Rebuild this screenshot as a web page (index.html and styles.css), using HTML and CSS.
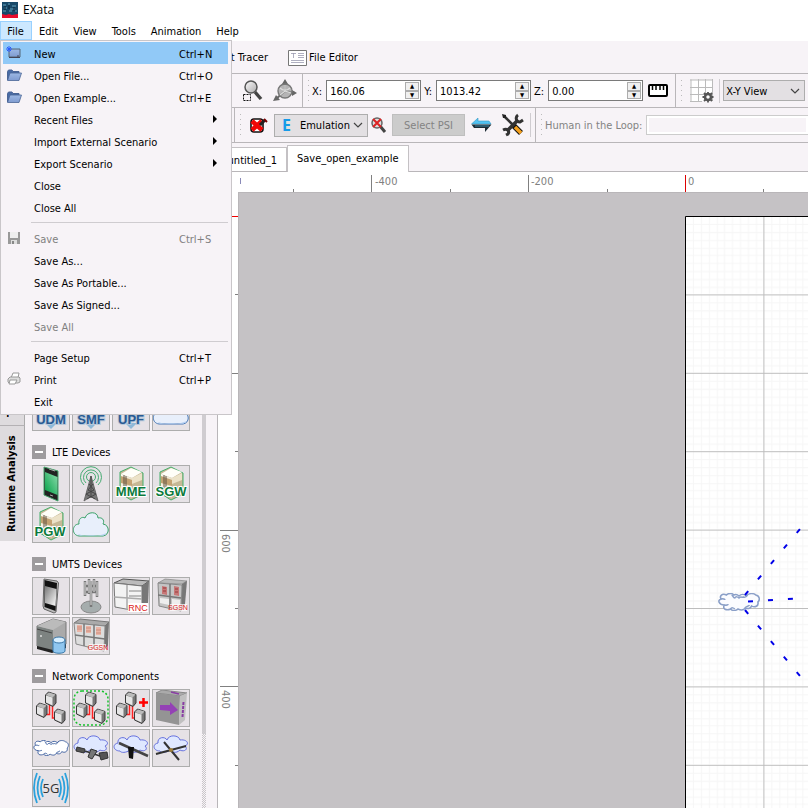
FILE: index.html
```html
<!DOCTYPE html>
<html lang="en">
<head>
<meta charset="utf-8">
<title>EXata</title>
<link rel="stylesheet" href="styles.css">
</head>
<body>
<svg class="defs" aria-hidden="true">
  <defs>
    <linearGradient id="steel" x1="0" y1="0" x2="1" y2="1"><stop offset="0" stop-color="#fff"/><stop offset="1" stop-color="#8c8c8c"/></linearGradient>
    <linearGradient id="green" x1="1" y1="0" x2="0" y2="1"><stop offset="0" stop-color="#8fdcae"/><stop offset="1" stop-color="#00a045"/></linearGradient>
    <linearGradient id="grey" x1="0" y1="0" x2="1" y2="1"><stop offset="0" stop-color="#777"/><stop offset="1" stop-color="#fff"/></linearGradient>
    <linearGradient id="blue" x1="0" y1="0" x2="0" y2="1"><stop offset="0" stop-color="#9cb8e4"/><stop offset="1" stop-color="#7f9bd0"/></linearGradient>
    <linearGradient id="cloth" x1="0" y1="0" x2="1" y2="1"><stop offset="0" stop-color="#fffdf5"/><stop offset="1" stop-color="#d6c9a8"/></linearGradient>
    <symbol id="folder" viewBox="0 0 16 12"><path d="M1.500 11V2.500L2.500 1H6L7 2.500H13V4" fill="#486ba5" stroke="#4a6596"/><path d="M1.500 11.500L4 4H15.500L13 11.500Z" fill="url(#blue)" stroke="#4a6596" stroke-width=".8"/></symbol>
    <symbol id="chevron" viewBox="0 0 10 6"><path d="M1 1L5 5L9 1" fill="none" stroke="#444" stroke-width="1.200"/></symbol>
    <symbol id="tower-box" viewBox="0 0 36 36"><path d="M7 6L18 1L30 7V28L18 34L7 27Z" fill="#c6b896" stroke="#45b06d"/><path d="M8 8L18 2L29 6L19 12Z" fill="#fffef8"/><path d="M8 8L19 12V32L8 26Z" fill="url(#cloth)"/><path d="M8 10L19 14V20L8 17Z" fill="#c4a273"/><path d="M19 12L29 7V14L19 18Z" fill="#ece2c8"/><path d="M11 9V25M13 10V25" stroke="#5f5344"/></symbol>
    <symbol id="nodes" viewBox="0 0 36 36"><path d="M16.500 15V24.500H13M19.500 15V28H22" fill="none" stroke="#f22" stroke-width="1.500"/><g id="cube"><path d="M12.500 5L15.500 2L23 4.500V13L20 16.500L12.500 13Z" fill="#777" stroke="#3a3a3a"/><path d="M13 5.500L19.500 7.500V15.500L13 12.500Z" fill="#e6e6e6"/><path d="M13 5L16 2.500L22.500 4.500L19.500 7.500Z" fill="#bbb"/></g><use href="#cube" x="-9" y="11"/><use href="#cube" x="9" y="17"/></symbol>
    <symbol id="cloud" viewBox="0 0 36 30"><path d="M6 26C-2 25-1 14 6 14C5 9 9 6 12 8C14 1 25 1 25 8C29 7 32 10 30 14C37 15 37 25 30 26Z" fill="#e8effb"/><path d="M3 23C9 27 27 27 33 23C32 26 30 25.500 29 25.500H7Z" fill="#b4cff2" stroke="none"/></symbol>
    <symbol id="fluffy" viewBox="0 0 40 18" preserveAspectRatio="none"><path d="M6 12C1 12-1 7 3 6C1 3 4 0 8 2C10 0 14 0 15 2C17 1 19 2 20 3C22 1 25 1 27 3C29 0 34 0 36 2C40 3 40 7 38 9C39 13 35 15 32 13C31 16 28 16 26 15C24 18 21 17 19 16C17 18 13 18 12 16C8 18 4 16 6 12Z"/><path d="M13 2C15 3 14 5 16 5C17 3 19 4 20 5C22 3 23 5 24 4C26 5 27 4 28 2M6 12C8 13 9 11 10 12M12 16C13 14 15 15 16 16M26 15C26 13 29 14 30 12M3 6C5 5 6 7 7 6" fill="none"/></symbol>
    <symbol id="sky" viewBox="0 0 36 20"><path d="M7 16C0 16-1 9 5 8C4 2 12 1 14 5C16-1 26 0 27 5C34 4 37 9 32 11C36 15 30 17 27 15C23 19 18 17 17 15C13 18 8 18 7 16Z" fill="#dfe8ff" stroke="#6670dd"/></symbol>
    <symbol id="cabinet" viewBox="0 0 36 36"><path d="M5 5L12 1L34 3L29 6Z" fill="#b9b9b9" stroke="#777" stroke-width=".6"/><path d="M29 6L34 3L32 26L28 32Z" fill="#777"/><path d="M5 5L29 7L28 33L6 28Z" fill="#c4c4c4" stroke="#888"/><path d="M7 20L16 21V27L7 25ZM19 21L27 22V29L19 28Z" fill="#eee"/><path d="M5 17L28 20M17 6V31" stroke="#777" stroke-width="1.500"/></symbol>
  </defs>
</svg>

<div class="app">
  <header class="titlebar">
    <svg class="logo" viewBox="0 0 16 16" aria-hidden="true"><path fill="#184969" d="M0 0H16V16H0Z"/><path fill="#e80c2d" d="M0 12L4 13L7 12L10 13L16 12V16H0Z"/><path d="M1 3H4M6 2H8M10 4H14M2 6H5M8 7H13M1 9H4M7 9H10M13 9H15" stroke="#65a3bd"/><path d="M3 4V8M7 3V7M12 5V9" stroke="#0a2438"/></svg>
    <span>EXata</span>
  </header>
  <nav class="menubar">
    <button class="open">File</button><button>Edit</button><button>View</button><button>Tools</button><button>Animation</button><button>Help</button>
  </nav>

  <div class="toolbar modes">
    <button class="mode tracer">t Tracer</button>
    <button class="mode"><svg width="19" height="17" viewBox="0 0 19 17" aria-hidden="true"><path d="M.5.500H18.500V15.500H.5Z" fill="#fff" stroke="#777"/><path d="M3 3.500H8M5.500 3V8M10 3.500H16M10 5.500H16M10 7.500H16M3 10.500H16M3 12.500H16" stroke="#9b9bb0" stroke-width=".8"/></svg>File Editor</button>
  </div>

  <div class="toolbar coords">
    <div class="group tools-left">
      <button class="icon" aria-label="Zoom region"><svg width="22" height="22" viewBox="0 0 22 22"><path d="M13 12L19 19" stroke="#444" stroke-width="3.400"/><circle cx="9" cy="7" r="6" fill="url(#steel)" fill-opacity=".7" stroke="#555" stroke-width="1.500"/><path d="M1.500 14.500H8.500V20.500H1.500Z" fill="none" stroke="#111" stroke-dasharray="2 1"/></svg></button>
      <button class="icon" aria-label="Axes"><svg width="24" height="24" viewBox="0 0 24 24"><path d="M12 2V12L22 14M12 12L3 20" fill="none" stroke="#666" stroke-width="2"/><path d="M12 0L15 5H9ZM24 14L19 17V11ZM0 22L3 16L7 21Z" fill="#666"/><circle cx="12" cy="12" r="7" fill="#999" fill-opacity=".7" stroke="#777" stroke-width="1.400"/><path d="M12 6V12L18 14M12 12L7 16M7 9C10 12 14 12 17 9" fill="none" stroke="#ddd" stroke-width="1.200"/></svg></button>
    </div>
    <div class="group">
      <span class="grip"></span>
      <label for="cx">X:</label><span class="spin"><input id="cx" type="text" value="160.06"><span class="steps"><button aria-label="X up">▲</button><button aria-label="X down">▼</button></span></span>
      <label for="cy">Y:</label><span class="spin"><input id="cy" type="text" value="1013.42"><span class="steps"><button aria-label="Y up">▲</button><button aria-label="Y down">▼</button></span></span>
      <label for="cz">Z:</label><span class="spin"><input id="cz" type="text" value="0.00"><span class="steps"><button aria-label="Z up">▲</button><button aria-label="Z down">▼</button></span></span>
      <button class="icon measure" aria-label="Measure"><svg width="20" height="13" viewBox="0 0 20 13"><rect x="1" y="1" width="18" height="11" rx="1" fill="#fff" stroke="#000" stroke-width="2"/><path d="M4.500 1V6M8 1V6M12 1V6M15.500 1V6" stroke="#000" stroke-width="1.500"/></svg></button>
    </div>
    <div class="group">
      <span class="grip"></span>
      <button class="icon grid-btn" aria-label="Grid settings"><svg width="24" height="24" viewBox="0 0 24 24"><path d="M.5 1H22V22H.5Z" fill="#fff"/><path d="M1 .5V22M8.500 0V22M15.500 0V22M22.500 0V22M0 1H23M0 8.500H23M0 15.500H23M0 22.500H12" stroke="#bbb"/><circle cx="18" cy="18" r="3" fill="none" stroke="#555" stroke-width="2.500"/><path d="M18 13V15M18 21V23.500M12.500 18H15M21 18H23.500M14 14L16 16M20 20L22 22M22 14L20 16M16 20L14 22" stroke="#555" stroke-width="1.800"/></svg></button>
      <span class="sep"></span>
      <span class="combo view"><select aria-label="View plane"><option>X-Y View</option></select><svg class="chev" aria-hidden="true"><use href="#chevron"/></svg></span>
    </div>
  </div>

  <div class="toolbar emulation">
    <div class="group lead"></div>
    <div class="group">
      <span class="grip"></span>
      <button class="icon stop" aria-label="Disable editing"><svg width="18" height="17" viewBox="0 0 18 17"><rect x="1" y="2" width="12" height="13" rx="3" fill="#fff" stroke="#111" stroke-width="1.600"/><path d="M2 4L12 13M12 4L2 13" stroke="#f00707" stroke-width="4.500"/><path d="M10 8L15 3" stroke="#222" stroke-width="3"/><path d="M14 2L17 5" stroke="#700" stroke-width="2"/></svg></button>
      <span class="combo mode-select"><b aria-hidden="true">E</b><select aria-label="Run mode"><option>Emulation</option></select><svg class="chev" aria-hidden="true"><use href="#chevron"/></svg></span>
      <button class="icon inspect" aria-label="Clear inspection"><svg width="16" height="17" viewBox="0 0 16 17"><path d="M9 9L14 15" stroke="#444" stroke-width="3"/><circle cx="6" cy="6" r="5" fill="#ddd" stroke="#666" stroke-width="1.500"/><path d="M2 2L10 10M10 2L2 10" stroke="#d22" stroke-width="2"/></svg></button>
      <button class="psi" disabled>Select PSI</button>
      <button class="icon swap" aria-label="Swap"><svg width="21" height="16" viewBox="0 0 21 16"><path d="M.5 7L7 1V4H18L20 7Z" fill="#53c3f3" stroke="#3899c4" stroke-width=".6"/><path d="M.5 7.500H20.500L14 15V11H3Z" fill="#1d2c35"/><path d="M4 9H18" stroke="#3d84a4"/></svg></button>
      <button class="icon wrench" aria-label="Tools"><svg width="24" height="24" viewBox="0 0 24 24"><path d="M12 12L20 20" stroke="#111" stroke-width="5.500"/><path d="M14 14L20 20" stroke="#f5a01d" stroke-width="3.500"/><path d="M3 3L12 12" stroke="#333" stroke-width="2.500"/><path d="M1 1L5 2V5L2 5Z" fill="#222"/><path d="M6 18L17 7" stroke="#333" stroke-width="3.500"/><path d="M17 2C14 4 15 9 19 9L22 7M2 17C6 15 9 18 7 21L5 22" fill="none" stroke="#333" stroke-width="3"/></svg></button>
      <span class="sep"></span>
    </div>
    <div class="group human">
      <span class="grip"></span>
      <label for="hitl">Human in the Loop:</label><input id="hitl" type="text" disabled>
    </div>
  </div>

  <div class="tabs">
    <button class="tab first">untitled_1</button><button class="tab active">Save_open_example</button>
  </div>

  <main class="work">
    <aside class="side">
      <div class="side-tabs"><button class="upper">T</button><button>Runtime Analysis</button></div>
      <div class="palette">
        <section>
          <div class="tiles">
            <button aria-label="UDM"><svg viewBox="0 0 36 36"><path d="M18 35L12 29H24Z" fill="#8fb9d8"/><text class="tag blue" x="18" y="30">UDM</text></svg></button>
            <button aria-label="SMF"><svg viewBox="0 0 36 36"><path d="M18 35L12 29H24Z" fill="#8fb9d8"/><text class="tag blue" x="18" y="30">SMF</text></svg></button>
            <button aria-label="UPF"><svg viewBox="0 0 36 36"><path d="M18 35L12 29H24Z" fill="#8fb9d8"/><text class="tag blue" x="18" y="30">UPF</text></svg></button>
            <button aria-label="5G cloud"><svg viewBox="0 0 36 36"><use href="#cloud" y="4" width="36" height="30" stroke="#4677b5"/></svg></button>
          </div>
        </section>
        <section>
          <h2><button class="fold" aria-label="Collapse LTE Devices"></button><span>LTE Devices</span></h2>
          <div class="tiles">
            <button aria-label="LTE phone"><svg viewBox="0 0 36 36"><path d="M11 1L25 5V35L11 29Z" fill="#222" stroke="#44a36a"/><path d="M12 6L24.500 11V29L12 24Z" fill="url(#green)"/><path d="M16 3L22 5M17 29L20 30" stroke="#aaa"/></svg></button>
            <button aria-label="eNodeB"><svg viewBox="0 0 36 36"><g fill="none" stroke="#45aa71"><path d="M11 19A10.500 10.500 0 1 1 25 19"/><path d="M13 17A7.500 7.500 0 1 1 23 17"/><circle cx="18" cy="11" r="4.500"/></g><path d="M18 10L11 35L18 30L25 35Z" fill="#777" stroke="#666"/><path d="M16 18L21 24L13 28L22 33M20 18L15 24L23 28L14 33M18 10V32" fill="none" stroke="#444"/></svg></button>
            <button aria-label="MME"><svg viewBox="0 0 36 36"><use href="#tower-box"/><text class="tag" x="18" y="30">MME</text></svg></button>
            <button aria-label="SGW"><svg viewBox="0 0 36 36"><use href="#tower-box"/><text class="tag" x="18" y="30">SGW</text></svg></button>
            <button aria-label="PGW"><svg viewBox="0 0 36 36"><use href="#tower-box"/><text class="tag" x="17" y="30">PGW</text></svg></button>
            <button aria-label="LTE cloud"><svg viewBox="0 0 36 36"><use href="#cloud" y="4" width="36" height="30" stroke="#39a168"/></svg></button>
          </div>
        </section>
        <section>
          <h2><button class="fold" aria-label="Collapse UMTS Devices"></button><span>UMTS Devices</span></h2>
          <div class="tiles">
            <button aria-label="UMTS phone"><svg viewBox="0 0 36 36"><path d="M11 1L24 3L25.500 5L23 34L21 35L11 31L10 28Z" fill="#bbb" stroke="#666"/><path d="M11.500 2L24 5L22.500 33L11.500 29Z" fill="#111"/><path d="M12 8L23.500 11L22.500 28L12 25Z" fill="url(#grey)"/></svg></button>
            <button aria-label="NodeB"><svg viewBox="0 0 36 36"><ellipse cx="18" cy="29" rx="10" ry="6" fill="#a5adad" stroke="#888"/><path d="M18 3V29M12 8H23M12 14H24" stroke="#777" stroke-width="2.500"/><path d="M12 3V18M16 1V16M21 1V15M24 3V19" stroke="#777" stroke-width="2.500"/><path d="M12 4V17M16 2V15M21 2V14M24 4V18M18 3V27" stroke="#ddd"/></svg></button>
            <button aria-label="RNC"><svg viewBox="0 0 36 36"><path d="M1 5L10 1L36 3L29 8Z" fill="#bbb" stroke="#555"/><path d="M29 8L36 3L35 27L29 34Z" fill="#777"/><path d="M1 5L29 8V34L2 29Z" fill="#f3f3f3" stroke="#777"/><path d="M1 19L29 21M14 7V32M16 13H29M16 18H29" stroke="#aaa" stroke-width="1.500"/><path d="M15 25H35V34H15Z" fill="#fff"/><text class="model large" x="25" y="33">RNC</text></svg></button>
            <button aria-label="SGSN"><svg viewBox="0 0 36 36"><use href="#cabinet"/><path d="M9 8L14 9V17L9 16ZM21 8L26 9V18L21 17Z" fill="#c77777"/><path d="M10 10H13M22 11H25M10 13H13M22 14H25" stroke="#963c3c"/><path d="M17 26H34V33H17Z" fill="#fff" fill-opacity=".7"/><text class="model" x="25" y="32">SGSN</text></svg></button>
            <button aria-label="HLR"><svg viewBox="0 0 36 36"><path d="M4 8L20 1L33 4V26L19 33L4 28Z" fill="#aaa" stroke="#777"/><path d="M4 8L20 12V33L4 28Z" fill="#7d8381"/><path d="M4 8L20 1L33 4L20 12Z" fill="#bbb"/><path d="M4 28L20 32L33 26V30L19 35L4 31Z" fill="#222"/><path d="M4 11L19 15" stroke="#444"/><circle cx="8" cy="18" r="1" fill="#ddd"/><path d="M20 22V33C20 36 32 36 32 33V22" fill="#8fc6ef" stroke="#3977a8"/><ellipse cx="26" cy="22" rx="6" ry="3" fill="#d8efff" stroke="#3977a8"/></svg></button>
            <button aria-label="GGSN"><svg viewBox="0 0 36 36"><path d="M1 5L7 1L36 4L32 8Z" fill="#aaa" stroke="#777"/><path d="M32 8L36 4L35 27L31 33Z" fill="#777"/><path d="M1 5L32 8L31 33L3 26Z" fill="#ddd" stroke="#888"/><path d="M11 6V28M21 7V30M2 17L32 21" stroke="#777" stroke-width="1.500"/><path d="M4 7H9V14H4ZM13 8H18V15H13ZM23 9H28V17H23Z" fill="#e9b5a7"/><path d="M4 9H9M4 11H9M13 10H18M13 13H18M23 12H28M23 15H28" stroke="#cc8d7c"/><path d="M16 26H33V33H16Z" fill="#fff" fill-opacity=".7"/><text class="model" x="25" y="32">GGSN</text></svg></button>
          </div>
        </section>
        <section>
          <h2><button class="fold" aria-label="Collapse Network Components"></button><span>Network Components</span></h2>
          <div class="tiles">
            <button aria-label="Hierarchy"><svg viewBox="0 0 36 36"><use href="#nodes"/></svg></button>
            <button aria-label="Subnet"><svg viewBox="0 0 36 36"><rect x="1" y="1" width="34" height="34" rx="8" fill="none" stroke="#16c22c" stroke-width="1.500" stroke-dasharray="2 2"/><use href="#nodes"/></svg></button>
            <button aria-label="Add hierarchy"><svg viewBox="0 0 36 36"><use href="#nodes"/><path d="M30.500 8V17M26 12.500H35" stroke="#f00" stroke-width="2.500"/></svg></button>
            <button aria-label="Switch"><svg viewBox="0 0 36 36"><path d="M3 3L9 0L34 3L27 6Z" fill="#aaa" stroke="#888"/><path d="M3 3L27 6L26 35L3 30Z" fill="#949494"/><path d="M27 6L34 3L32 30L26 35Z" fill="#c0c0c0"/><path d="M7 15H17V12L25 20L17 25V21L7 20Z" fill="#9441b5"/><path d="M18 2L26 4" stroke="#893da4" stroke-width="1.500"/><path d="M30.500 12L29.500 27" stroke="#893da4" stroke-width="2" stroke-dasharray="3 1"/></svg></button>
            <button aria-label="Wireless subnet"><svg viewBox="0 0 36 36"><use href="#fluffy" y="10" width="36" height="16" fill="#fff" stroke="#385b9c"/></svg></button>
            <button aria-label="Satellite"><svg viewBox="0 0 36 36"><use href="#sky" y="5" width="36" height="20"/><path d="M4 17L12 19L11 23L3 21ZM26 23L34 22L35 28L28 30Z" fill="#555" stroke="#333"/><path d="M12 21L27 26" stroke="#333" stroke-width="1.500"/><path d="M18 19L24 21L19 29L15 27Z" fill="#777" stroke="#333"/></svg></button>
            <button aria-label="Geo satellite"><svg viewBox="0 0 36 36"><use href="#sky" y="5" width="36" height="20"/><path d="M6 13L35 26" stroke="#444" stroke-width="2.500"/><path d="M15 17H21L20 29L16 28Z" fill="#111"/></svg></button>
            <button aria-label="Relay satellite"><svg viewBox="0 0 36 36"><use href="#sky" y="5" width="36" height="20"/><path d="M11 12L26 30M3 24L33 16" stroke="#333" stroke-width="2"/><circle cx="18" cy="20" r="2" fill="#a0803b"/></svg></button>
            <button aria-label="5G"><svg viewBox="0 0 36 36"><g fill="none" stroke="#2ba1dc" stroke-width="1.800"><path d="M4 3Q-2 18 4 33M7 6Q2 18 7 30M10 9Q6 18 10 27M32 3Q38 18 32 33M29 6Q34 18 29 30M26 9Q30 18 26 27"/></g><text class="five" x="18" y="23">5G</text></svg></button>
          </div>
        </section>
      </div>
      <div class="scroll"><div class="thumb"></div></div>
    </aside>

    <div class="editor">
      <svg class="ruler-top" aria-hidden="true">
        <path d="M153.500 3V20M310.500 3V20M75.500 17V20M232.500 17V20M389.500 17V20M545.500 17V20" stroke="#808080"/>
        <path d="M467.500 3V20" stroke="#d00"/><path d="M22.500 6V12" stroke="#8a8ab8"/>
        <text x="157" y="13">-400</text><text x="313" y="13">-200</text><text x="470" y="13">0</text>
      </svg>
      <svg class="ruler-left" aria-hidden="true">
        <path d="M2 181.500H20M2 338.500H20M2 494.500H20M17 102.500H20M17 259.500H20M17 416.500H20M17 573.500H20" stroke="#808080"/>
        <path d="M2 24.500H20" stroke="#e00"/>
        <text transform="translate(4 342) rotate(90)">600</text><text transform="translate(4 498) rotate(90)">400</text>
      </svg>
      <svg class="canvas" role="img" aria-label="Scenario canvas">
        <defs>
          <pattern id="major" x="446" y="23" width="78.400" height="78.400" patternUnits="userSpaceOnUse">
            <path d="M8.500 0V78M16.500 0V78M24.500 0V78M32.500 0V78M39.500 0V78M47.500 0V78M55.500 0V78M63.500 0V78M71.500 0V78M0 8.500H78M0 16.500H78M0 24.500H78M0 32.500H78M0 39.500H78M0 47.500H78M0 55.500H78M0 63.500H78M0 71.500H78" stroke="#f6f6f6"/>
            <path d="M.5 0V78.400M0 .5H78.400" stroke="#bdbdbd"/>
          </pattern>
        </defs>
        <path d="M446 23H3000V3000H446Z" fill="#fff"/>
        <path d="M446 23H3000V3000H446Z" fill="url(#major)"/><path d="M446.500 3000V23.500H3000" fill="none" stroke="#000"/>
        <use href="#fluffy" x="479" y="400" width="42" height="18" fill="#fbfcff" stroke="#8ba0c8" stroke-width="1.500"/>
        <g stroke="#0000e8" stroke-width="2"><path d="M506 402L561 336" stroke-dasharray="5 15.200"/><path d="M509 408.500L557 405.500" stroke-dasharray="5 15"/><path d="M506 417L561 483" stroke-dasharray="5 15.200"/></g>
      </svg>
    </div>
  </main>

  <div class="file-menu" role="menu">
    <button class="sel" role="menuitem"><svg viewBox="0 0 16 14"><path d="M3 3H14V11H3Z" fill="url(#blue)" stroke="#567"/><path d="M3 11.500H14M12 9V11" stroke="#445"/><path d="M3 0V6M0 3H6M1 1L5 5M5 1L1 5" stroke="#2a5dff"/></svg><span>New</span><kbd>Ctrl+N</kbd></button>
    <button role="menuitem"><svg viewBox="0 0 16 12"><use href="#folder"/></svg><span>Open File...</span><kbd>Ctrl+O</kbd></button>
    <button role="menuitem"><svg viewBox="0 0 16 12"><use href="#folder"/></svg><span>Open Example...</span><kbd>Ctrl+E</kbd></button>
    <button role="menuitem"><i></i><span>Recent Files</span><em></em></button>
    <button role="menuitem"><i></i><span>Import External Scenario</span><em></em></button>
    <button role="menuitem"><i></i><span>Export Scenario</span><em></em></button>
    <button role="menuitem"><i></i><span>Close</span></button>
    <button role="menuitem"><i></i><span>Close All</span></button>
    <hr>
    <button role="menuitem" disabled><svg viewBox="0 0 16 14"><path d="M2 1H14V13H2Z" fill="#999"/><path d="M4 1H12V7H4Z" fill="#eee"/><path d="M5 9H11V13H5Z" fill="#ddd"/><path d="M6 10H8V13H6Z" fill="#888"/></svg><span>Save</span><kbd>Ctrl+S</kbd></button>
    <button role="menuitem"><i></i><span>Save As...</span></button>
    <button role="menuitem"><i></i><span>Save As Portable...</span></button>
    <button role="menuitem"><i></i><span>Save As Signed...</span></button>
    <button role="menuitem" disabled><i></i><span>Save All</span></button>
    <hr>
    <button role="menuitem"><i></i><span>Page Setup</span><kbd>Ctrl+T</kbd></button>
    <button role="menuitem"><svg viewBox="0 0 16 14"><path d="M5 6L7 1H13L12 6" fill="#fff" stroke="#999"/><path d="M2 7L4 5H13L14 6V10L12 11H3L2 10Z" fill="#ddd" stroke="#999"/><path d="M4 8H11L9 12H3Z" fill="#fff" stroke="#999"/></svg><span>Print</span><kbd>Ctrl+P</kbd></button>
    <button role="menuitem"><i></i><span>Exit</span></button>
  </div>
</div>
</body>
</html>
```
FILE: styles.css
```css
* { box-sizing: border-box; }
body { margin: 0; font: 11px/16px "DejaVu Sans Condensed", "Noto Sans", sans-serif; color: #000; }
button, input, select { font: inherit; color: inherit; margin: 0; padding: 0; border: 0; border-radius: 0; background: none; }
.defs { position: absolute; width: 0; height: 0; }
.app { position: relative; display: flex; flex-direction: column; height: 100vh; overflow: hidden; background: #f7f3f7; }

.titlebar { flex: none; display: flex; align-items: center; gap: 5px; height: 21px; padding: 0 2px 2px; background: #fff; font: 12px/16px "Open Sans", sans-serif; }
.logo { width: 16px; height: 16px; }
.menubar { flex: none; display: flex; height: 20px; background: #fff; }
.menubar button { height: 19px; padding: 2px 7px 0 6px; border: 1px solid transparent; line-height: 15px; white-space: nowrap; }
.menubar .open { min-width: 32px; background: #cce8ff; border-color: #99d1ff; }

.toolbar { flex: none; display: flex; border-bottom: 1px solid #b9b6b9; white-space: nowrap; }
.modes { height: 33px; align-items: center; gap: 20px; padding-top: 2px; }
.mode { display: flex; align-items: center; gap: 2px; }
.tracer { width: 268px; justify-content: flex-end; }
.coords { height: 34px; }
.emulation { height: 35px; }
.group { display: flex; align-items: center; border-right: 1px solid #b9b6b9; }
.group:last-child { border-right: 0; }
.group label { padding-top: 2px; }
.grip { flex: none; width: 3px; height: 26px; margin: 0 2px 0 4px; background: radial-gradient(circle, #bbb 1px, transparent 1px) 0 0 / 3px 5px; }
.sep { width: 1px; height: 24px; background: #cfccd0; }
.icon { display: flex; align-items: center; justify-content: center; }
.tools-left { flex: none; width: 303px; justify-content: flex-end; gap: 9px; padding-right: 5px; }
.spin { display: flex; width: 95px; height: 21px; margin: 0 3px 0 4px; padding: 1px; border: 1px solid #7a7a7a; background: #fff; }
.spin input { flex: 1; min-width: 0; padding: 2px 0 0 2px; outline: 0; }
.steps { display: flex; flex-direction: column; width: 14px; }
.steps button { flex: 1; display: flex; align-items: center; justify-content: center; border: 1px solid #adadad; background: #f0f0f0; font-size: 6px; line-height: 6px; }
.measure { margin: 0 7px 0 2px; }
.grid-btn { margin: 0 5px; }
.combo { position: relative; display: flex; align-items: center; border: 1px solid #adadad; background: #e3e0e3; }
.combo select { flex: 1; height: 100%; padding-top: 2px; appearance: none; outline: 0; }
.chev { position: absolute; right: 4px; width: 10px; height: 6px; pointer-events: none; }
.view { flex: none; width: 82px; height: 21px; margin-left: 3px; padding-left: 2px; }
.lead { width: 235px; }
.stop { margin: 0 6px; }
.mode-select { width: 94px; height: 23px; padding-left: 7px; gap: 9px; }
.mode-select b { font: bold 16px/20px "Open Sans", sans-serif; color: #169be8; }
.inspect { margin: 0 5px 0 3px; }
.psi { width: 73px; height: 22px; padding-top: 2px; border: 1px solid #bfbfbf; background: #ccc; color: #838383; }
.swap { margin: 0 9px 0 6px; }
.wrench { margin-right: 5px; }
.emulation .sep { margin-right: 4px; }
.human { flex: 1; color: #838383; }
.human input { flex: 1; min-width: 0; height: 20px; margin-left: 4px; border: 1px solid #ccc; border-right: 0; background: #f7f3f7; box-shadow: inset 0 0 0 2px #fff; }

.tabs { flex: none; display: flex; align-items: flex-end; height: 29px; border-bottom: 1px solid #b9b6b9; }
.tab { height: 24px; padding-top: 2px; border: 1px solid #c4c1c4; border-bottom: 0; background: #fff; }
.first { width: 287px; padding-right: 9px; text-align: right; }
.active { height: 27px; margin: 0 0 -1px; padding: 0 10px 0 9px; }

.work { flex: 1; min-height: 0; display: flex; }
.side { flex: none; display: flex; width: 218px; border-right: 1px solid #b9b6b9; }
.side-tabs { width: 25px; }
.side-tabs button { display: block; width: 25px; height: 115px; border-left: 1px solid #aaa; background: #dedbde; font: bold 11px/24px "DejaVu Sans Condensed", sans-serif; writing-mode: vertical-rl; transform: rotate(180deg); text-align: center; }
.side-tabs .upper { height: 254px; border-top: 1px solid #b4b1b4; padding-top: 8px; text-align: left; }
.palette { flex: 1; padding: 221px 0 0 7px; overflow: hidden; }
.palette section { margin-bottom: 14px; }
.palette h2 { display: flex; align-items: center; gap: 6px; height: 14px; margin: 0 0 6px; font: inherit; white-space: nowrap; }
.palette h2 span { padding-top: 2px; }
.fold { display: flex; align-items: center; justify-content: center; width: 14px; height: 14px; background: #9e9b9e; }
.fold::before { content: ""; width: 8px; height: 2px; background: #fff; }
.tiles { display: grid; grid-template-columns: repeat(4, 38px); gap: 2px; }
.tiles button { display: flex; width: 38px; height: 38px; border: 1px solid #adadad; background: #e6e2e6; }
.tiles svg { width: 36px; height: 36px; fill: none; }
.tag { font: bold 13px "Liberation Sans", sans-serif; fill: #0b7a3c; stroke: #fff; stroke-width: 2px; paint-order: stroke; text-anchor: middle; }
.tag.blue { fill: #285a93; stroke: #b8c8da; }
.model { font: 7px "Liberation Sans", sans-serif; fill: #d22; text-anchor: middle; }
.model.large { font-size: 9px; }
.five { font: 13px "Open Sans", sans-serif; fill: #333; text-anchor: middle; }
.scroll { flex: none; width: 4px; margin-right: 11px; background: repeating-conic-gradient(#c9c6c9 0 25%, #f7f3f7 0 50%) 0 0 / 2px 2px; }
.thumb { height: 562px; background: #cfccd0; }

.editor { flex: 1; min-width: 0; display: grid; grid-template: 20px 1fr / 20px 1fr; background: #fff; }
.editor svg { display: block; }
.ruler-top { grid-column: 1 / 3; width: 100%; height: 20px; }
.ruler-left { width: 20px; height: 100%; }
.ruler-top text, .ruler-left text { fill: #808080; }
.canvas { width: 100%; height: 100%; border: solid #b9b6b9; border-width: 1px 0 0 1px; background: #c5c2c5; overflow: hidden; }

.file-menu { position: absolute; top: 40px; left: 0; width: 232px; padding: 1px 3px 2px 2px; border: 1px solid #c9c6c9; background: #f7f3f7; }
.file-menu button { display: flex; align-items: center; width: 100%; height: 22px; padding-left: 3px; text-align: left; }
.file-menu .sel { background: #91c9f7; }
.file-menu button:disabled { color: #808080; }
.file-menu svg, .file-menu i { flex: none; width: 16px; height: 14px; margin-right: 12px; }
.file-menu span { flex: 1; padding-top: 3px; }
.file-menu kbd { width: 49px; padding-top: 3px; font: inherit; }
.file-menu em { width: 0; margin-right: 11px; border: solid transparent; border-width: 4px 0 4px 4px; border-left-color: #000; }
.file-menu hr { height: 1px; margin: 4px 0 4px 28px; border: 0; background: #cfccd0; }
```
